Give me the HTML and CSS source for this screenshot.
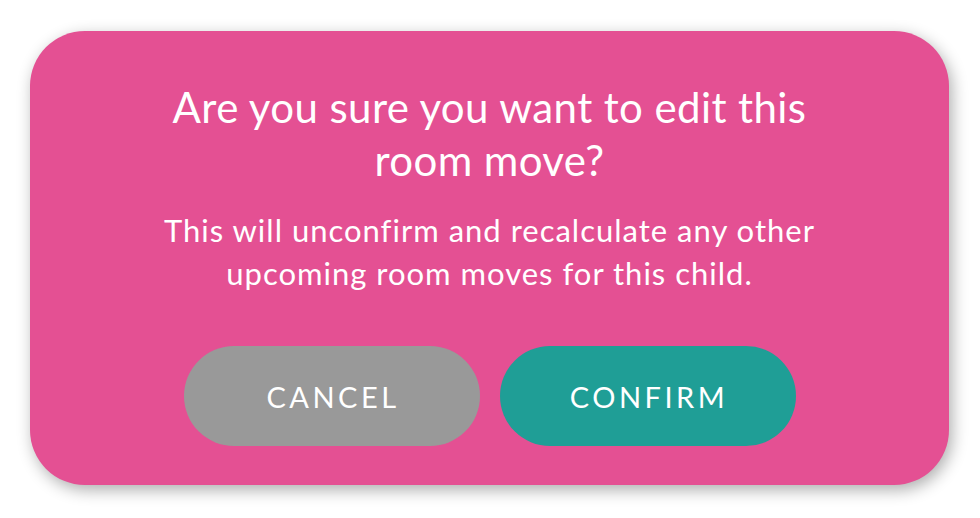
FILE: index.html
```html
<!DOCTYPE html>
<html lang="en">
<head>
    <meta charset="UTF-8">
    <meta name="viewport" content="width=device-width, initial-scale=1.0">
    <title>Edit room move</title>
    <link rel="stylesheet" href="styles.css">
</head>
<body>
    <div class="dialog">
        <h1 class="title">Are you sure you want to edit this room move?</h1>
        <p class="message">This will unconfirm and recalculate any other upcoming room moves for this child.</p>
        <div class="actions">
            <button class="btn cancel">CANCEL</button>
            <button class="btn confirm">CONFIRM</button>
        </div>
    </div>
</body>
</html>
```

FILE: styles.css
```css
body {
    margin: 0;
    padding: 31px 31px 33px 30px;
    background: #ffffff;
    font-family: Lato, "Open Sans", sans-serif;
}

.dialog {
    box-sizing: border-box;
    width: 919px;
    height: 454px;
    padding: 50px 60px 0;
    background-color: #e45093;
    border-radius: 55px;
    box-shadow: 3px 5px 16px rgba(0, 0, 0, 0.32);
    color: #ffffff;
    text-align: center;
}

.title {
    margin: 0 auto;
    max-width: 660px;
    font-size: 42px;
    font-weight: 400;
    line-height: 53px;
    letter-spacing: 0.4px;
}

.message {
    margin: 22px auto 0;
    max-width: 700px;
    font-size: 31px;
    line-height: 43px;
    letter-spacing: 1px;
}

.actions {
    display: flex;
    justify-content: center;
    gap: 20px;
    margin-top: 51px;
}

.btn {
    width: 296px;
    height: 100px;
    padding: 0 0 0 3px;
    border: none;
    border-radius: 50px;
    color: #ffffff;
    font-family: inherit;
    font-size: 29px;
    letter-spacing: 3.5px;
    cursor: pointer;
}

.cancel {
    background-color: #999999;
}

.confirm {
    background-color: #1f9e96;
}
```
